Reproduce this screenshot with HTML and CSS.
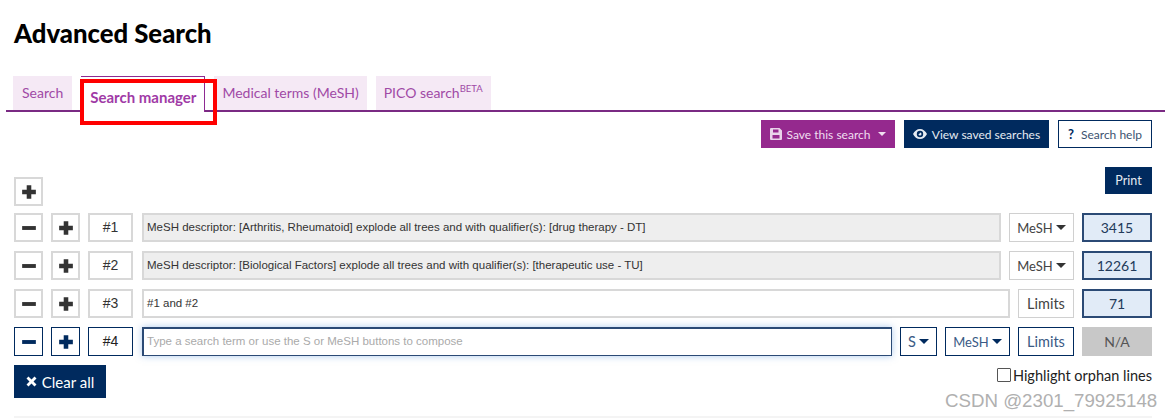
FILE: index.html
```html
<!DOCTYPE html><html lang="en">
<head>
  <meta charset="UTF-8">
  <meta name="viewport" content="width=device-width, initial-scale=1.0">
  <title>Advanced Search</title>
  <link rel="stylesheet" href="styles.css">
</head>
<body>
  <svg class="defs" width="0" height="0">
    <symbol id="i-plus" viewBox="0 0 14 14"><path d="M5 1h4v4h4v4H9v4H5V9H1V5h4z"/></symbol>
    <symbol id="i-minus" viewBox="0 0 14 14"><path d="M1 5.300h12v3.400H1z"/></symbol>
  </svg>

  <h1>Advanced Search</h1>

  <div class="tabs">
    <a class="tab first">Search</a>
    <a class="tab active">Search manager</a>
    <a class="tab">Medical terms (MeSH)</a>
    <a class="tab">PICO search<sup>BETA</sup></a>
  </div>
  <div class="red-box"></div>

  <div class="toolbar">
    <button class="btn purple">
      <svg width="12" height="12" viewBox="0 0 12 12"><path fill="#e9d3ea" fill-rule="evenodd" d="M1 0h8.500L12 2.500V11a1 1 0 0 1-1 1H1a1 1 0 0 1-1-1V1a1 1 0 0 1 1-1zm2 1.500v3h5.500v-3zm-.5 5.500v3.500h7V7z"/></svg>
      Save this search <i class="caret light"></i>
    </button>
    <button class="btn navy">
      <svg width="14" height="10" viewBox="0 0 14 10"><path fill="#e6ebf2" fill-rule="evenodd" d="M7 0c3 0 5.500 2 7 5-1.500 3-4 5-7 5S1.500 8 0 5c1.500-3 4-5 7-5zm0 1.800a3.200 3.200 0 1 0 0 6.400 3.200 3.200 0 0 0 0-6.400zM7 3.500a1.500 1.500 0 1 1-1.500 1.500c.6.300 1.500-.7 1.500-1.500z"/></svg>
      View saved searches
    </button>
    <button class="btn outline"><b class="q">?</b> Search help</button>
  </div>

  <div class="top-row">
    <button class="sq"><svg class="ico"><use href="#i-plus"/></svg></button>
    <button class="print">Print</button>
  </div>

  <div class="row">
    <button class="sq"><svg class="ico"><use href="#i-minus"/></svg></button>
    <button class="sq"><svg class="ico"><use href="#i-plus"/></svg></button>
    <div class="num">#1</div>
    <div class="term locked">MeSH descriptor: [Arthritis, Rheumatoid] explode all trees and with qualifier(s): [drug therapy - DT]</div>
    <button class="opt mesh">MeSH<i class="caret"></i></button>
    <div class="count">3415</div>
  </div>
  <div class="row">
    <button class="sq"><svg class="ico"><use href="#i-minus"/></svg></button>
    <button class="sq"><svg class="ico"><use href="#i-plus"/></svg></button>
    <div class="num">#2</div>
    <div class="term locked">MeSH descriptor: [Biological Factors] explode all trees and with qualifier(s): [therapeutic use - TU]</div>
    <button class="opt mesh">MeSH<i class="caret"></i></button>
    <div class="count">12261</div>
  </div>
  <div class="row">
    <button class="sq"><svg class="ico"><use href="#i-minus"/></svg></button>
    <button class="sq"><svg class="ico"><use href="#i-plus"/></svg></button>
    <div class="num">#3</div>
    <div class="term">#1 and #2</div>
    <button class="opt limits">Limits</button>
    <div class="count">71</div>
  </div>
  <div class="row focus">
    <button class="sq"><svg class="ico"><use href="#i-minus"/></svg></button>
    <button class="sq"><svg class="ico"><use href="#i-plus"/></svg></button>
    <div class="num">#4</div>
    <div class="term placeholder">Type a search term or use the S or MeSH buttons to compose</div>
    <button class="opt small">S<i class="caret"></i></button>
    <button class="opt mesh">MeSH<i class="caret"></i></button>
    <button class="opt limits">Limits</button>
    <div class="count na">N/A</div>
  </div>

  <div class="bottom-row">
    <button class="btn navy clear">
      <svg width="11" height="11" viewBox="0 0 11 11"><path fill="#fff" d="M2.500.5 5.500 3.500 8.500.5l2 2-3 3 3 3-2 2-3-3-3 3-2-2 3-3-3-3z"/></svg>
      Clear all
    </button>
    <label class="orphan"><span class="check"></span>Highlight orphan lines</label>
  </div>
  <div class="foot-line"></div>

  <div class="watermark">CSDN @2301_79925148</div>
</body>
</html>
```

FILE: styles.css
```css
body {
  margin: 0;
  padding: 0 20px 0 14px;
  height: 419px;
  box-sizing: border-box;
  overflow: hidden;
  position: relative;
  background: #fff;
  color: #222;
  font-family: "Lato", "Noto Sans", sans-serif;
}
.defs {
  position: absolute;
}
h1 {
  margin: 0;
  padding-top: 19px;
  height: 76px;
  box-sizing: border-box;
  font-size: 25.700px;
  line-height: 28px;
  font-weight: 900;
  color: #000;
}
button {
  font-family: inherit;
  cursor: pointer;
  box-sizing: border-box;
}

/* tabs */
.tabs {
  display: flex;
  align-items: flex-end;
  gap: 9px;
  margin: 0 -13px 0 -8px;
  padding-left: 7px;
  height: 36px;
  box-sizing: border-box;
  border-bottom: 2px solid #7a2a83;
}
.tab {
  display: block;
  height: 34px;
  box-sizing: border-box;
  padding: 0 8px;
  line-height: 34px;
  font-size: 14px;
  color: #a04aa6;
  background: #f5e9f5;
}
.tab.first {
  padding: 0 9px;
}
.tab.active {
  height: 36px;
  margin-bottom: -2px;
  padding: 3px 8px 0 9px;
  font-size: 15px;
  background: #fff;
  color: #a03aa6;
  font-weight: 700;
  border-top: 1px solid #8e2a92;
  border-right: 1px solid #8e2a92;
}
.tab sup {
  font-size: 9.500px;
  line-height: 0;
}
.red-box {
  position: absolute;
  left: 80px;
  top: 79px;
  width: 137px;
  height: 46px;
  box-sizing: border-box;
  border: 4px solid #f00;
}

/* toolbar */
.toolbar {
  display: flex;
  justify-content: flex-end;
  gap: 9px;
  margin-top: 8px;
}
.btn {
  display: flex;
  align-items: center;
  justify-content: center;
  gap: 5px;
  height: 28px;
  font-size: 12px;
  padding: 0;
  border: 1px solid transparent;
}
.purple {
  width: 134px;
  background: #95298e;
  color: #f0dff0;
}
.navy {
  width: 145px;
  background: #002a5e;
  color: #e6ebf2;
}
.outline {
  width: 94px;
  background: #fff;
  color: #3c5270;
  border-color: #002a5e;
}
.q {
  color: #002a5e;
  font-size: 13px;
  margin-right: 2px;
}
.caret {
  display: inline-block;
  width: 0;
  height: 0;
  margin-left: 3px;
  border-left: 5px solid transparent;
  border-right: 5px solid transparent;
  border-top: 5px solid #333;
}
.caret.light {
  margin-left: 3px;
  border-left-width: 4px;
  border-right-width: 4px;
  border-top-width: 4px;
  border-top-color: #f0dff0;
}

.top-row {
  display: flex;
  justify-content: space-between;
  height: 39px;
  margin: 19px 0 7px;
}
.top-row .sq {
  align-self: flex-end;
}
.print {
  width: 47px;
  height: 27px;
  padding: 0;
  border: 0;
  background: #002a5e;
  color: #e6ebf2;
  font-size: 12.500px;
}

/* search lines */
.row {
  display: flex;
  gap: 8px;
  height: 29px;
  margin-bottom: 9px;
}
.sq, .num, .opt, .term, .count {
  height: 29px;
  box-sizing: border-box;
  border: 2px solid #d8d8d8;
  background: #fff;
}
.sq {
  width: 29px;
  padding: 0;
  display: flex;
  align-items: center;
  justify-content: center;
}
.ico {
  width: 16px;
  height: 16px;
  fill: #333;
}
.num {
  width: 45px;
  margin-right: 1px;
  text-align: center;
  line-height: 25px;
  font-size: 14px;
  font-family: "Liberation Sans", sans-serif;
  color: #333;
}
.term {
  flex: 1;
  padding-left: 3px;
  line-height: 24px;
  font-size: 11.500px;
  font-family: "Liberation Sans", sans-serif;
  color: #333;
  white-space: nowrap;
  overflow: hidden;
}
.term.locked {
  background: #eee;
}
.opt {
  padding: 0;
  font-size: 14.500px;
  color: #444;
  border-width: 1px;
  border-color: #d0d0d0;
  display: flex;
  align-items: center;
  justify-content: center;
}
.mesh {
  width: 65px;
  font-size: 13px;
}
.limits {
  width: 56px;
}
.small {
  width: 37px;
}
.count {
  width: 70px;
  text-align: center;
  font-size: 14px;
  line-height: 25px;
  color: #223a5a;
  background: #e1ebf7;
  border-color: #2b4a75;
}
.count.na {
  background: #c8c8c8;
  border-color: #c8c8c8;
  color: #555;
}
.focus .sq, .focus .num, .focus .opt {
  border: 1px solid #002a5e;
}
.focus .sq .ico {
  fill: #002a5e;
}
.focus .num {
  line-height: 27px;
  color: #222;
}
.focus .opt {
  color: #3a5a85;
}
.focus .caret {
  border-top-color: #002a5e;
}
.focus .term {
  border-color: #2b4a75;
  border-width: 2px 1px 1px 2px;
  color: #aaa;
  line-height: 25px;
  box-shadow: 0 0 7px rgba(90, 150, 220, 0.5);
}

.bottom-row {
  display: flex;
  justify-content: space-between;
  margin-top: 1px;
}
.clear {
  width: 92px;
  height: 33px;
  color: #fff;
  font-size: 15px;
}
.orphan {
  display: flex;
  align-items: center;
  height: 22px;
  margin-top: -1px;
  font-size: 14.500px;
  color: #222;
}
.check {
  width: 12px;
  height: 12px;
  margin-right: 2px;
  border: 1px solid #555;
  border-radius: 1px;
}
.foot-line {
  height: 2px;
  margin-top: 18px;
  background: #f4f4f4;
}
.watermark {
  position: absolute;
  left: 945px;
  top: 391px;
  font-family: "Liberation Sans", sans-serif;
  font-size: 18.700px;
  line-height: 20px;
  color: #b0b0b0;
  white-space: nowrap;
}
```
